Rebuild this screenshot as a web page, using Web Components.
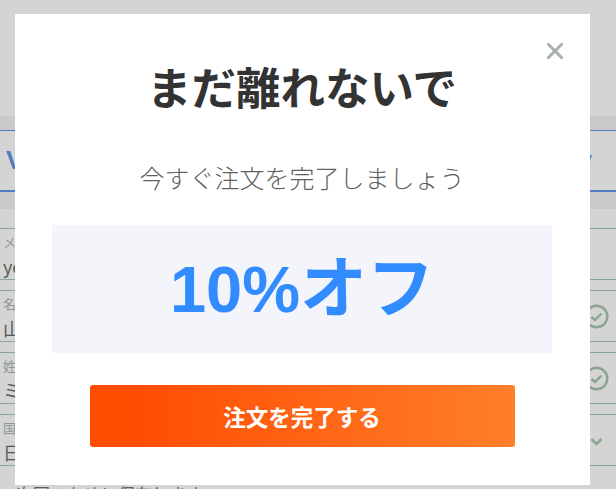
<!DOCTYPE html>
<html lang="ja">
<head>
<meta charset="utf-8">
<title>まだ離れないで</title>
<style>
    html, body { margin: 0; height: 100%; overflow: hidden; background: #fff; }
    body { font-family: "Noto Sans CJK JP", "Liberation Sans", sans-serif; }
</style>
</head>
<body>

<template id="form-field-template">
    <style>
        :host {
            display: block;
            position: relative;
            box-sizing: border-box;
            height: var(--h, 52px);
            border-top: 1px solid #a9c7af;
            border-bottom: 1px solid #a9c7af;
            padding: 4px 0 0 3px;
        }
        .label { font-size: 13px; line-height: 17px; color: #a9b9ae; }
        .value { font-size: 18px; line-height: 24px; color: #66706a; margin-top: 4px; white-space: nowrap; }
        .state { position: absolute; right: 7px; top: 13px; width: 25px; height: 25px; }
    </style>
    <div class="label"><slot name="label"></slot></div>
    <div class="value"><slot name="value"></slot></div>
    <div class="state"><slot name="state"></slot></div>
</template>

<template id="checkout-page-template">
    <style>
        :host { display: block; height: 489px; overflow: hidden; font-family: "Noto Sans CJK JP", "Liberation Sans", sans-serif; }
        .spacer { height: 116px; }
        .band { height: 14px; background: #f2f2f2; }
        .tabs {
            box-sizing: border-box;
            height: 62px;
            border-top: 1px solid #6096eb;
            border-bottom: 2px solid #6096eb;
            display: flex;
            justify-content: space-between;
            align-items: center;
            padding: 0 24px 0 6px;
            color: #5f96ea;
            font: bold 26px "Liberation Sans", sans-serif;
        }
        .band2 { height: 17px; background: #f2f2f2; margin-bottom: 19px; }
        .fields { display: flex; flex-direction: column; gap: 10px; }
        .note { padding: 16px 0 0 16px; font-size: 17px; line-height: 24px; color: #707070; white-space: nowrap; }
    </style>
    <div class="spacer"></div>
    <div class="band"></div>
    <div class="tabs"><span>V</span><span>v</span></div>
    <div class="band2"></div>
    <div class="fields"><slot></slot></div>
    <div class="note">次回のために保存します</div>
</template>

<template id="offer-modal-template">
    <style>
        :host {
            position: fixed;
            inset: 0;
            z-index: 10;
            display: block;
            background: rgba(0, 0, 0, .17);
        }
        .box {
            position: absolute;
            left: 15px;
            top: 14px;
            box-sizing: border-box;
            width: 575px;
            height: 471px;
            background: #fff;
            padding: 44px 38px 0 37px;
            display: flex;
            flex-direction: column;
            align-items: center;
            font-family: "Noto Sans CJK JP", "Liberation Sans", sans-serif;
        }
        h1 {
            margin: 0;
            font-size: 44.5px;
            line-height: 56px;
            font-weight: 700;
            color: #333;
            white-space: nowrap;
        }
        p {
            margin: 45px 0 0;
            font-size: 25px;
            line-height: 36px;
            font-weight: 300;
            color: #5f5f5f;
            white-space: nowrap;
        }
        .offer {
            align-self: stretch;
            height: 128px;
            margin-top: 30px;
            background: #f3f5fb;
            display: flex;
            align-items: center;
            justify-content: center;
        }
        .actions { margin-top: 32px; }
        close-button { position: absolute; right: 26px; top: 28px; }
    </style>
    <div class="box">
        <close-button></close-button>
        <h1><slot name="title"></slot></h1>
        <p><slot name="sub"></slot></p>
        <div class="offer"><slot name="offer"></slot></div>
        <div class="actions"><slot name="action"></slot></div>
    </div>
</template>

<template id="offer-amount-template">
    <style>
        :host {
            display: block;
            font: bold 65px/80px "Liberation Sans", "Noto Sans CJK JP", sans-serif;
            color: #338cff;
            white-space: nowrap;
        }
        ::slotted(span) { font-size: 67px; }
    </style>
    <slot></slot>
</template>

<template id="order-button-template">
    <style>
        :host { display: block; }
        button {
            display: block;
            width: 425px;
            height: 62px;
            padding: 0;
            border: 0;
            border-radius: 3px;
            background: linear-gradient(90deg, #ff4d00 10%, #ff7f2a 100%);
            color: #fff;
            font: 700 22.5px "Noto Sans CJK JP", sans-serif;
        }
    </style>
    <button><slot></slot></button>
</template>

<template id="close-button-template">
    <style>
        :host { display: block; width: 18px; height: 18px; }
        svg { display: block; }
    </style>
    <svg width="18" height="18" viewBox="0 0 18 18"><path d="M1.5 1.5 16.5 16.5M16.5 1.5 1.5 16.5" stroke="#a9b0b0" stroke-width="3" fill="none"/></svg>
</template>

<script>
    function shadowFrom(el, id) {
        el.attachShadow({ mode: 'open' }).appendChild(document.getElementById(id).content.cloneNode(true));
    }
    class FormField extends HTMLElement { constructor() { super(); shadowFrom(this, 'form-field-template'); } }
    class CheckoutPage extends HTMLElement { constructor() { super(); shadowFrom(this, 'checkout-page-template'); } }
    class OfferModal extends HTMLElement { constructor() { super(); shadowFrom(this, 'offer-modal-template'); } }
    class OfferAmount extends HTMLElement { constructor() { super(); shadowFrom(this, 'offer-amount-template'); } }
    class OrderButton extends HTMLElement { constructor() { super(); shadowFrom(this, 'order-button-template'); } }
    class CloseButton extends HTMLElement { constructor() { super(); shadowFrom(this, 'close-button-template'); } }
    customElements.define('form-field', FormField);
    customElements.define('checkout-page', CheckoutPage);
    customElements.define('offer-modal', OfferModal);
    customElements.define('offer-amount', OfferAmount);
    customElements.define('order-button', OrderButton);
    customElements.define('close-button', CloseButton);
</script>

<checkout-page>
    <form-field>
        <span slot="label">メール</span><span slot="value">you@example.com</span>
    </form-field>
    <form-field>
        <span slot="label">名</span><span slot="value">山田</span>
        <svg slot="state" width="25" height="25" viewBox="0 0 25 25" fill="none" stroke="#a9c7af" stroke-width="2.4"><circle cx="12.5" cy="12.5" r="10.8"/><path d="M7.5 13 11 16 17.5 9.5"/></svg>
    </form-field>
    <form-field>
        <span slot="label">姓</span><span slot="value">ミキ</span>
        <svg slot="state" width="25" height="25" viewBox="0 0 25 25" fill="none" stroke="#a9c7af" stroke-width="2.4"><circle cx="12.5" cy="12.5" r="10.8"/><path d="M7.5 13 11 16 17.5 9.5"/></svg>
    </form-field>
    <form-field>
        <span slot="label">国</span><span slot="value">日本</span>
        <svg slot="state" width="25" height="25" viewBox="0 0 25 25" fill="none" stroke="#a9c7af" stroke-width="2.6"><path d="M7.5 11 12.5 16 17.5 11"/></svg>
    </form-field>
</checkout-page>

<offer-modal>
    <span slot="title">まだ離れないで</span>
    <span slot="sub">今すぐ注文を完了しましょう</span>
    <offer-amount slot="offer">10%<span>オフ</span></offer-amount>
    <order-button slot="action">注文を完了する</order-button>
</offer-modal>

</body>
</html>
